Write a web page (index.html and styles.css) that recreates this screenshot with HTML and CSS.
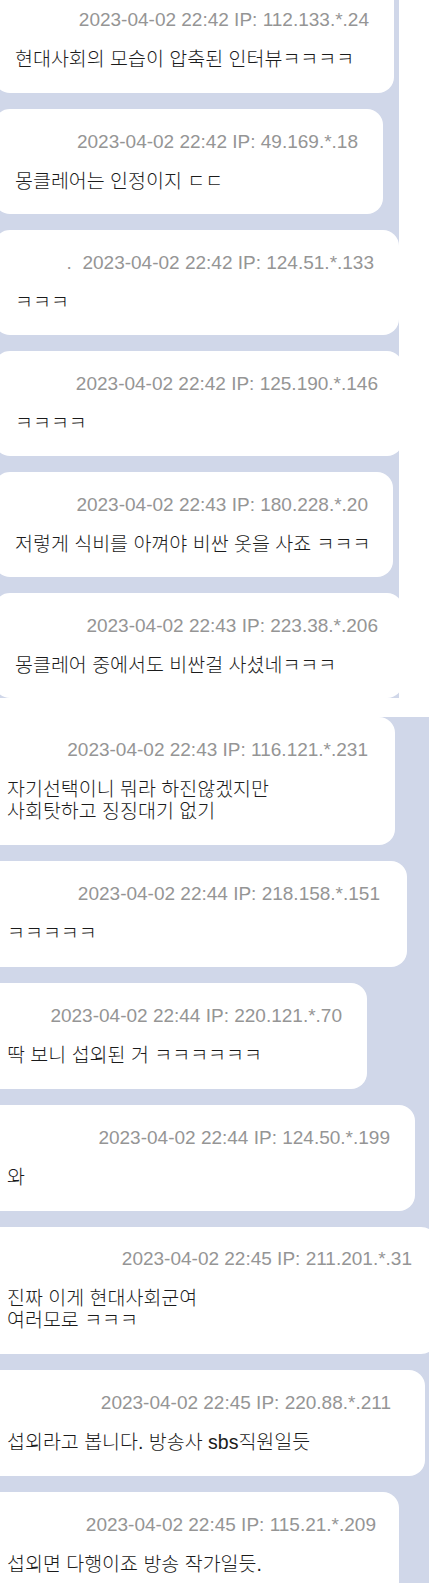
FILE: index.html
```html
<!DOCTYPE html>
<html lang="ko">
<head>
<meta charset="utf-8">
<title>댓글</title>
<link rel="stylesheet" href="styles.css">
</head>
<body>
<main class="feed">
  <section class="strip strip-a">
    <article class="bubble b1">
      <div class="meta">2023-04-02 22:42 IP: 112.133.*.24</div>
      <p class="text">현대사회의 모습이 압축된 인터뷰ㅋㅋㅋㅋ</p>
    </article>
    <article class="bubble b2">
      <div class="meta">2023-04-02 22:42 IP: 49.169.*.18</div>
      <p class="text">몽클레어는 인정이지 ㄷㄷ</p>
    </article>
    <article class="bubble b3">
      <div class="meta">.&nbsp; 2023-04-02 22:42 IP: 124.51.*.133</div>
      <p class="text">ㅋㅋㅋ</p>
    </article>
    <article class="bubble b4">
      <div class="meta">2023-04-02 22:42 IP: 125.190.*.146</div>
      <p class="text">ㅋㅋㅋㅋ</p>
    </article>
    <article class="bubble b5">
      <div class="meta">2023-04-02 22:43 IP: 180.228.*.20</div>
      <p class="text">저렇게 식비를 아껴야 비싼 옷을 사죠 ㅋㅋㅋ</p>
    </article>
    <article class="bubble b6">
      <div class="meta">2023-04-02 22:43 IP: 223.38.*.206</div>
      <p class="text">몽클레어 중에서도 비싼걸 사셨네ㅋㅋㅋ</p>
    </article>
  </section>
  <div class="break"></div>
  <section class="strip strip-b">
    <article class="bubble b7">
      <div class="meta">2023-04-02 22:43 IP: 116.121.*.231</div>
      <p class="text"><span class="line">자기선택이니 뭐라 하진않겠지만</span><span class="line">사회탓하고 징징대기 없기</span></p>
    </article>
    <article class="bubble b8">
      <div class="meta">2023-04-02 22:44 IP: 218.158.*.151</div>
      <p class="text">ㅋㅋㅋㅋㅋ</p>
    </article>
    <article class="bubble b9">
      <div class="meta">2023-04-02 22:44 IP: 220.121.*.70</div>
      <p class="text">딱 보니 섭외된 거 ㅋㅋㅋㅋㅋㅋ</p>
    </article>
    <article class="bubble b10">
      <div class="meta">2023-04-02 22:44 IP: 124.50.*.199</div>
      <p class="text">와</p>
    </article>
    <article class="bubble b11">
      <div class="meta">2023-04-02 22:45 IP: 211.201.*.31</div>
      <p class="text"><span class="line">진짜 이게 현대사회군여</span><span class="line">여러모로 ㅋㅋㅋ</span></p>
    </article>
    <article class="bubble b12">
      <div class="meta">2023-04-02 22:45 IP: 220.88.*.211</div>
      <p class="text">섭외라고 봅니다. 방송사 sbs직원일듯</p>
    </article>
    <article class="bubble b13">
      <div class="meta">2023-04-02 22:45 IP: 115.21.*.209</div>
      <p class="text">섭외면 다행이죠 방송 작가일듯.</p>
    </article>
  </section>
</main>
</body>
</html>
```

FILE: styles.css
```css
html, body {
  margin: 0;
  padding: 0;
  background: #ffffff;
  overflow: hidden;
}

.feed {
  width: 429px;
}

.strip {
  background: #d0d7e9;
  display: flow-root;
}

.strip-a {
  width: 399px;
}

.strip-b {
  width: 429px;
  overflow: hidden;
}

.break {
  height: 19px;
}

.bubble {
  background: #ffffff;
  border-radius: 16px;
  margin-left: -6px;
  padding: 22px 25px 22px 21px;
  box-sizing: border-box;
}

.bubble + .bubble {
  margin-top: 16px;
}

.strip-b .bubble {
  margin-left: -14px;
  padding-bottom: 23px;
}

.meta {
  font-family: "Liberation Sans", Arial, sans-serif;
  font-size: 19px;
  line-height: 22px;
  color: #959595;
  text-align: right;
  white-space: nowrap;
}

.text {
  margin: 17px 0 0;
  font-family: "Liberation Sans", "Noto Sans CJK KR", sans-serif;
  font-weight: 300;
  font-size: 19.5px;
  line-height: 22px;
  color: #1b1b1b;
  white-space: nowrap;
}

.line {
  display: block;
}

/* strip A bubble widths */
.b1 { width: 400px; margin-top: -13px; padding-bottom: 23px; border-top-left-radius: 0; border-top-right-radius: 0; }
.b2 { width: 389px; }
.b3 { width: 405px; }
.b4 { width: 409px; }
.b5 { width: 399px; }
.b6 { width: 409px; }

/* strip B bubble widths */
.b7 { width: 409px; padding-right: 27px; border-top-left-radius: 0; }
.b8 { width: 421px; padding-right: 27px; }
.b9 { width: 381px; }
.b10 { width: 429px; }
.b11 { width: 451px; padding-top: 21px; padding-bottom: 26px; }
.b12 { width: 439px; padding-right: 34px; }
.b13 { width: 413px; padding-right: 23px; }
```
